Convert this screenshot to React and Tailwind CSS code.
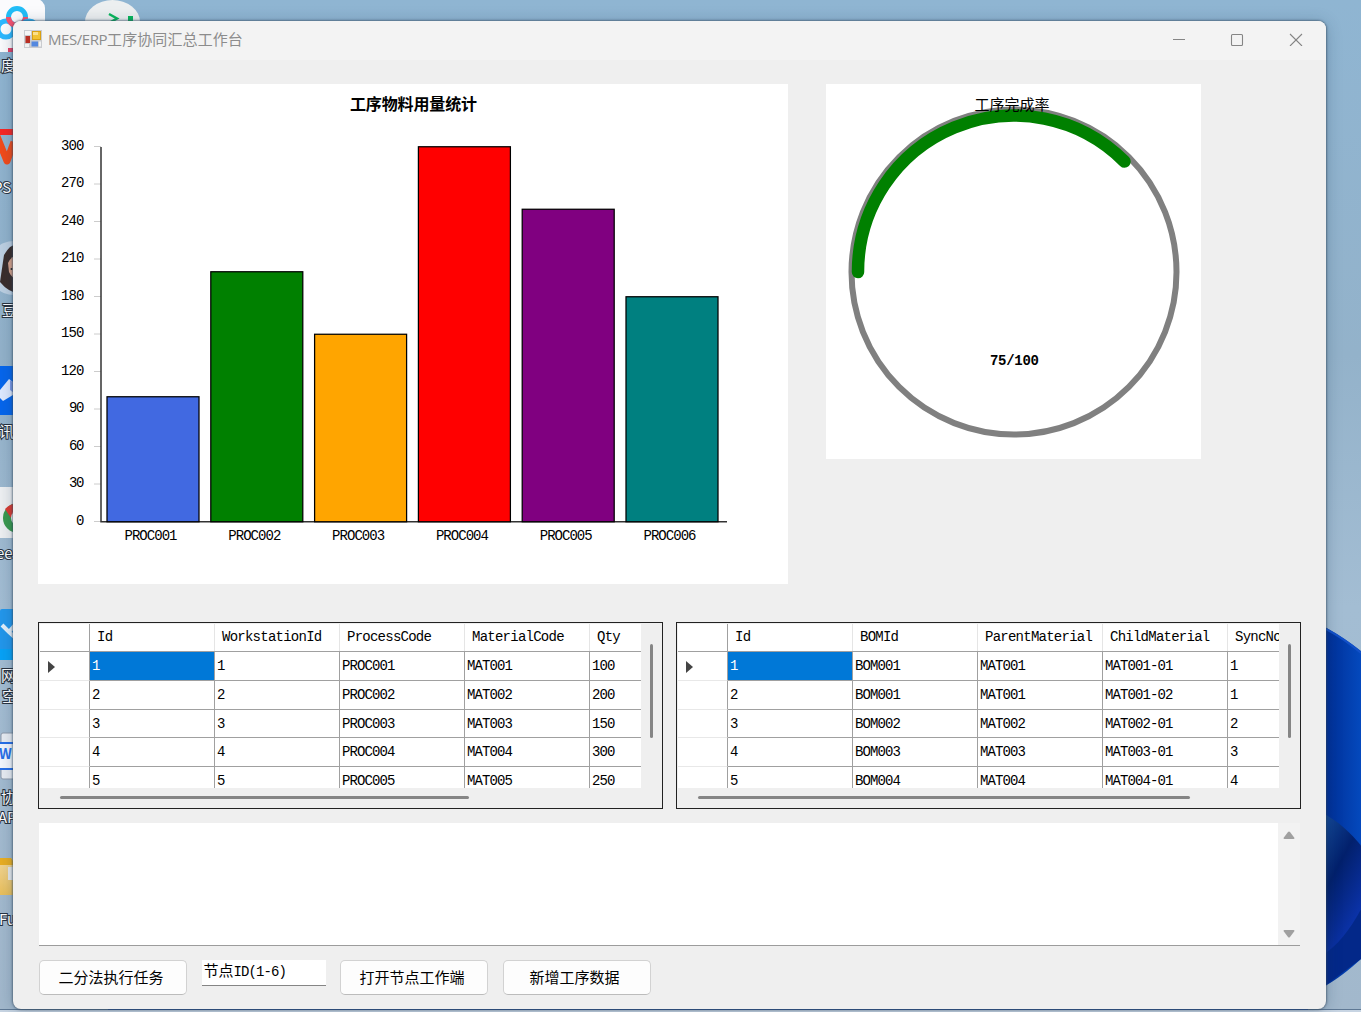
import React from "react";

const bars = [
  { name: "PROC001", qty: 100, color: "#4169e1" },
  { name: "PROC002", qty: 200, color: "#008000" },
  { name: "PROC003", qty: 150, color: "#ffa500" },
  { name: "PROC004", qty: 300, color: "#ff0000" },
  { name: "PROC005", qty: 250, color: "#800080" },
  { name: "PROC006", qty: 180, color: "#008080" },
];
const ticks = [0, 30, 60, 90, 120, 150, 180, 210, 240, 270, 300];

const stations = {
  columns: ["Id", "WorkstationId", "ProcessCode", "MaterialCode", "Qty"],
  rows: [
    ["1", "1", "PROC001", "MAT001", "100"],
    ["2", "2", "PROC002", "MAT002", "200"],
    ["3", "3", "PROC003", "MAT003", "150"],
    ["4", "4", "PROC004", "MAT004", "300"],
    ["5", "5", "PROC005", "MAT005", "250"],
  ],
};
const boms = {
  columns: ["Id", "BOMId", "ParentMaterial", "ChildMaterial", "SyncNode"],
  rows: [
    ["1", "BOM001", "MAT001", "MAT001-01", "1"],
    ["2", "BOM001", "MAT001", "MAT001-02", "1"],
    ["3", "BOM002", "MAT002", "MAT002-01", "2"],
    ["4", "BOM003", "MAT003", "MAT003-01", "3"],
    ["5", "BOM004", "MAT004", "MAT004-01", "4"],
  ],
};

const mono = "font-['Liberation_Mono','Noto_Sans_CJK_SC',monospace]";
const cjk = "font-['Noto_Sans_CJK_SC',sans-serif]";

function Wallpaper() {
  return (
    <svg className={"absolute inset-0 " + cjk} width="1361" height="1012" viewBox="0 0 1361 1012">
      <defs>
        <linearGradient id="sky" x1="0" y1="0" x2="0" y2="1">
          <stop offset="0" stopColor="#8fb5d2" />
          <stop offset="0.35" stopColor="#93b2ca" />
          <stop offset="0.6" stopColor="#a3bdd3" />
          <stop offset="1" stopColor="#a2b8cc" />
        </linearGradient>
        <linearGradient id="petal" x1="0" y1="0" x2="1" y2="0">
          <stop offset="0" stopColor="#002a90" />
          <stop offset="1" stopColor="#0449bd" />
        </linearGradient>
        <linearGradient id="petalDark" x1="0" y1="0" x2="0.6" y2="1">
          <stop offset="0" stopColor="#1650a0" />
          <stop offset="0.45" stopColor="#02206c" />
          <stop offset="1" stopColor="#0d37b8" />
        </linearGradient>
        <linearGradient id="folder" x1="0" y1="0" x2="0" y2="1">
          <stop offset="0" stopColor="#f3d89a" />
          <stop offset="1" stopColor="#e9bf5b" />
        </linearGradient>
      </defs>
      <rect width="1361" height="1012" fill="url(#sky)" />
      <path d="M1320 624C1337 634 1350 642 1361 651V959C1350 969 1338 979 1320 989Z" fill="url(#petal)" />
      <path d="M1320 952C1337 942 1353 925 1361 906V959L1320 989Z" fill="#032889" />
      <path d="M1320 812C1342 822 1357 840 1366 852V900C1353 925 1341 944 1320 957Z" fill="url(#petalDark)" />
      <path d="M1326 629Q1345 639 1361 653" fill="none" stroke="#1250c8" strokeWidth="2" />

      <rect x="-20" y="-1" width="65" height="53" rx="9" fill="#fbfbfd" />
      <circle cx="6" cy="29" r="8" fill="none" stroke="#2cb8ff" strokeWidth="5" />
      <circle cx="17" cy="17" r="8.500" fill="none" stroke="#22bdf7" strokeWidth="5" />
      <path d="M8.500 17A8.500 8.500 0 0 0 25.500 17" fill="none" stroke="#f45270" strokeWidth="5" />
      <circle cx="29" cy="29" r="8" fill="none" stroke="#2cb8ff" strokeWidth="5" />
      <rect x="8" y="48" width="6" height="4" fill="#e54267" />
      <ellipse cx="112.500" cy="22" rx="27.500" ry="22" fill="#eceff0" />
      <path d="M109 14L117 18.500L109 23" fill="none" stroke="#08b65b" strokeWidth="2.500" />
      <rect x="128" y="16" width="5" height="8" fill="#08b65b" />

      <rect x="0" y="129" width="14" height="6" fill="#f92724" />
      <path d="M-4 134L7 161L14 142" fill="none" stroke="#f34b1a" strokeWidth="7" strokeLinejoin="round" />
      <circle cx="14" cy="268" r="27" fill="#bdd0e2" />
      <path d="M4 255Q10 244 20 243V294Q8 292 0 282Z" fill="#3a2d2b" />
      <path d="M8 263Q12 254 20 256V281Q12 279 9 272Z" fill="#d6a28b" />
      <circle cx="11.500" cy="269" r="1" fill="#222" />
      <rect x="0" y="366" width="20" height="49" fill="#0666ec" />
      <path d="M0 390L9 379L18 386V392L3 401L0 398Z" fill="#dfeaff" />
      <path d="M10 380L14 383V393L10 390Z" fill="#7d9bea" />
      <rect x="0" y="487" width="20" height="51" fill="#eef0f2" />
      <circle cx="18" cy="518" r="15" fill="#3a9a4e" />
      <path d="M5 509Q10 503 20 503V512Q13 512 11 518Z" fill="#db3b32" />
      <circle cx="19" cy="518" r="8" fill="#fff" />
      <circle cx="19" cy="518" r="6" fill="#3268c8" />
      <rect x="0" y="609" width="20" height="51" rx="2" fill="#2397eb" />
      <rect x="0" y="649" width="20" height="11" fill="#08a2f6" />
      <path d="M2 625L9 632L20 642M9 632L20 619" fill="none" stroke="#e3f0fb" strokeWidth="4" />
      <rect x="1" y="733" width="18" height="46" rx="2" fill="#e9edf3" stroke="#8d9aab" />
      <rect x="0" y="743" width="20" height="26" fill="#f2f6fd" />
      <path d="M0 743H20M0 769H20" stroke="#276fe8" strokeWidth="2" />
      <text x="-1" y="759" fontSize="14" fontWeight="bold" fill="#276fe8">W</text>
      <path d="M0 858H11L14 862V895H0Z" fill="url(#folder)" />
      <path d="M0 858H11L14 862V865H0Z" fill="#e9ae22" />
      <rect x="8" y="867" width="7" height="13" fill="#e6e9eb" />

      <g className="[paint-order:stroke]" fill="#ffffff" stroke="#283240" strokeWidth="2" fontSize="15">
        <text x="1" y="71">度</text>
        <text x="-7" y="193">PS</text>
        <text x="2" y="316">豆</text>
        <text x="-1" y="437">讯</text>
        <text x="-4" y="559">ee</text>
        <text x="1" y="681">网</text>
        <text x="2" y="702">空</text>
        <text x="1" y="803">协</text>
        <text x="-2" y="823">AP</text>
        <text x="-1" y="925">Fu</text>
      </g>
      <rect y="1009" width="1361" height="1" fill="#5e7894" />
      <rect x="108" y="1009" width="1200" height="1" fill="#31569b" />
      <rect y="1010" width="1361" height="2" fill="#c8d5e3" />
    </svg>
  );
}

function TitleBar() {
  return (
    <header className="flex h-[39px] items-center justify-between bg-[#f3f3f3] pb-[3px] pl-[11px] pr-[22px]">
      <div className="flex items-center gap-1.5">
        <svg width="18" height="18" viewBox="0 0 18 18">
          <rect width="18" height="18" fill="#c9cbcf" />
          <rect x="1" y="1" width="6" height="4" fill="#f4f4f4" />
          <rect x="1.500" y="6" width="4.500" height="7" fill="#b92e23" />
          <rect x="8" y="1" width="9" height="9" fill="#d9a012" />
          <rect x="9" y="2" width="7" height="7" fill="#f1c232" />
          <rect x="9" y="2" width="5" height="3" fill="#fbe08a" />
          <rect x="1" y="14" width="4" height="3" fill="#f1f1f1" />
          <rect x="7.500" y="11.500" width="6.500" height="5" fill="#5488df" />
          <rect x="15" y="11.500" width="2" height="5" fill="#f1f1f1" />
        </svg>
        <h1 className="whitespace-nowrap font-['Open_Sans','Noto_Sans_CJK_SC',sans-serif] text-[15px] leading-5 text-[#8c8c8c]">
          <span className="tracking-[-0.45px]">MES/ERP</span>
          <span className={"tracking-[0.1px] " + cjk}>工序协同汇总工作台</span>
        </h1>
      </div>
      <svg width="132" height="14" viewBox="0 0 132 14" fill="none" stroke="#858585" strokeWidth="1.100">
        <path d="M1 7.500H13" />
        <rect x="59.500" y="2.500" width="11" height="11" rx="1" />
        <path d="M118 2L130 14M130 2L118 14" />
      </svg>
    </header>
  );
}

function BarChart() {
  return (
    <svg className={"block bg-white text-[14px] " + mono} width="750" height="500" viewBox="0 0 750 500">
      <text x="375.500" y="26" textAnchor="middle" fontSize="16" fontWeight="bold" textLength="127" className={cjk}>
        工序物料用量统计
      </text>
      {ticks.map((t) => {
        const y = 437.5 - t * 1.25;
        return (
          <g key={t}>
            <path d={`M56 ${y}H63`} stroke="#cccccc" />
            <text x="46.500" y={y + 3} textAnchor="end" textLength={String(t).length * 7.8}>
              {t}
            </text>
          </g>
        );
      })}
      <path d="M63 63V437.750H689" fill="none" stroke="#333333" strokeWidth="1.500" />
      {bars.map((b, i) => {
        const x = 69 + i * 103.8;
        return (
          <g key={b.name}>
            <rect x={x} y={437.75 - b.qty * 1.25} width="92" height={b.qty * 1.25} fill={b.color} stroke="#000000" strokeWidth="1.250" />
            <text x={x + 17.5} y="456" textLength="53">
              {b.name}
            </text>
          </g>
        );
      })}
    </svg>
  );
}

function Gauge() {
  return (
    <svg className="block bg-white" width="375" height="375" viewBox="0 0 375 375">
      <circle cx="188" cy="188" r="162.500" fill="none" stroke="#808080" strokeWidth="6" />
      <path d="M32 188A156 156 0 0 1 298.500 77.500" fill="none" stroke="#008000" strokeWidth="12.500" strokeLinecap="round" />
      <text x="186" y="26" textAnchor="middle" fontSize="15" textLength="75" className={cjk}>
        工序完成率
      </text>
      <text x="188.500" y="281" textAnchor="middle" fontSize="14" fontWeight="bold" textLength="49" className={mono}>
        75/100
      </text>
    </svg>
  );
}

function DataGrid({ data, thumb }) {
  return (
    <section className={"h-[187px] w-[625px] border-[1.5px] border-[#222222] pt-px pl-px text-[14px] text-black " + mono}>
      <div className="flex h-[164px]">
        <div className="w-[601px] overflow-hidden bg-white">
          <div className="flex h-[28px] w-[676px] border-b border-[#a0a0a0]">
            <div className="w-[50px] border-r border-[#a0a0a0]" />
            {data.columns.map((c) => (
              <div key={c} className="w-[125px] border-r border-[#e5e5e5] pl-[7px] leading-[26px] tracking-[-0.75px]">
                {c}
              </div>
            ))}
          </div>
          {data.rows.map((row, r) => (
            <div key={r} className="flex h-[28.75px] w-[676px]">
              <div className="flex w-[50px] items-center border-r border-b border-r-[#a0a0a0] border-b-[#e8e8e8] pl-2 pt-0.5">
                {r === 0 && (
                  <svg width="7" height="12" viewBox="0 0 7 12">
                    <path d="M0 0L7 6L0 12Z" fill="#444444" />
                  </svg>
                )}
              </div>
              {row.map((cell, c) => (
                <div
                  key={c}
                  className={
                    "w-[125px] border-r border-b border-[#a0a0a0] pl-[2px] leading-[28px] tracking-[-0.9px] " +
                    (r === 0 && c === 0 ? "bg-[#0078d7] text-white" : "")
                  }
                >
                  {cell}
                </div>
              ))}
            </div>
          ))}
        </div>
        <div className="pl-[9px] pt-[20px]">
          <div className="h-[94px] w-[3px] rounded-full bg-[#858585]" />
        </div>
      </div>
      <div className="pl-[20px] pt-[8px]">
        <div className={"h-[3px] rounded-full bg-[#858585] " + thumb} />
      </div>
    </section>
  );
}

function Button({ children }) {
  return (
    <button
      className={
        "h-[35px] w-[148px] rounded-[5px] border border-[#d2d2d2] border-b-[#bcbcbc] bg-[#fdfdfd] pr-1 pb-0.5 text-[15px] leading-none text-black " + cjk
      }
    >
      {children}
    </button>
  );
}

export default function App() {
  return (
    <div className="relative h-[1012px] w-[1361px] overflow-hidden">
      <Wallpaper />
      <div className="relative pl-[13px] pt-[21px]">
        <main className="h-[988px] w-[1313px] overflow-hidden rounded-[8px] bg-[#efefef] shadow-[0_0_2px_1px_rgba(50,70,90,0.55),0_2px_16px_rgba(20,50,80,0.28)]">
          <TitleBar />
          <div className="pl-[25px] pt-6">
            <div className="flex items-start gap-[38px]">
              <BarChart />
              <Gauge />
            </div>
            <div className="mt-[38px] flex gap-[13px]">
              <DataGrid data={stations} thumb="w-[409px]" />
              <DataGrid data={boms} thumb="w-[492px]" />
            </div>
            <div className="ml-px mt-[14px] flex h-[123px] w-[1261px] justify-end border-b-[1.5px] border-[#9c9c9c] bg-white">
              <div className="flex w-[22px] flex-col items-center justify-between bg-[#f2f2f2] pb-[7px] pt-2 pr-px">
                <svg width="12" height="9" viewBox="0 0 12 9">
                  <path d="M5 1Q6 0 7 1L11.500 7Q11.500 8 10.500 8H1.500Q0.500 8 0.500 7Z" fill="#a0a0a0" />
                </svg>
                <svg width="12" height="9" viewBox="0 0 12 9">
                  <path d="M5 8Q6 9 7 8L11.500 2Q11.500 1 10.500 1H1.500Q0.500 1 0.500 2Z" fill="#a0a0a0" />
                </svg>
              </div>
            </div>
            <div className="ml-px mt-[14px] flex items-start gap-[14.5px]">
              <Button>二分法执行任务</Button>
              <div
                className={
                  "h-[26px] w-[124px] whitespace-nowrap border-b-[1.5px] border-[#858585] bg-white pl-0.5 text-[14px] leading-[19px] tracking-[-0.9px] text-black " + mono
                }
              >
                <span className={"text-[15px] tracking-normal " + cjk}>节点</span>ID(1-6)
              </div>
              <Button>打开节点工作端</Button>
              <Button>新增工序数据</Button>
            </div>
          </div>
        </main>
      </div>
    </div>
  );
}
